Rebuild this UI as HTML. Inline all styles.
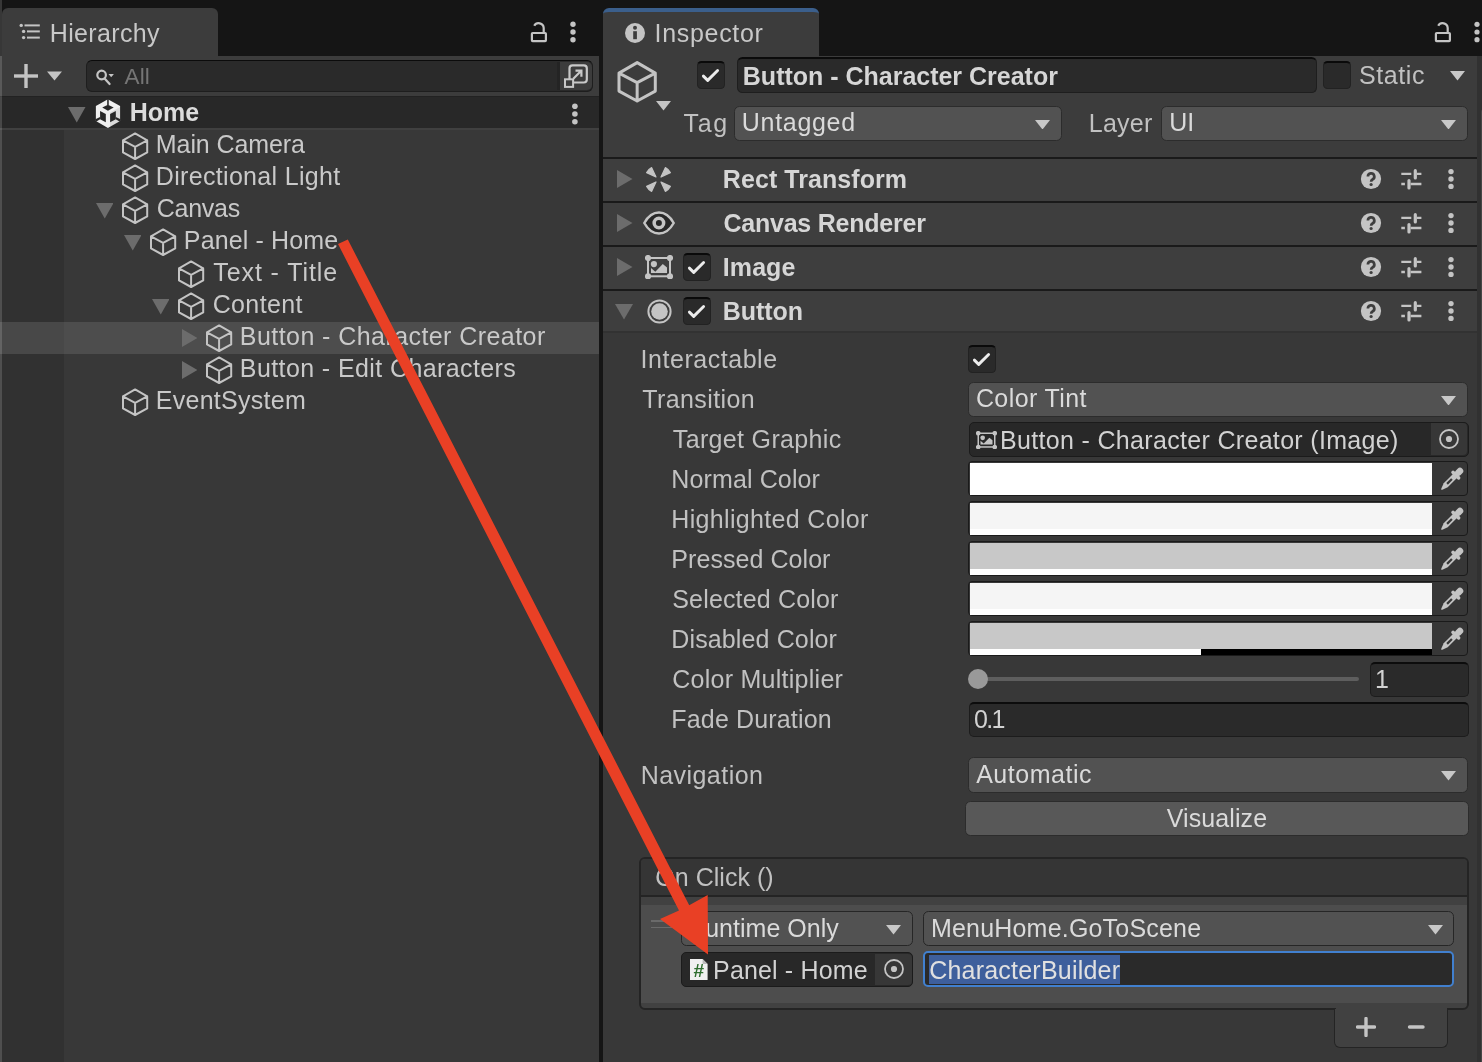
<!DOCTYPE html>
<html><head><meta charset="utf-8"><title>Unity Inspector</title>
<style>
html,body{margin:0;padding:0;background:#383838;}
body{width:1482px;height:1062px;position:relative;overflow:hidden;font-family:"Liberation Sans",sans-serif;font-size:25px;}
div,svg,span{position:absolute;display:block;}
.t{white-space:pre;line-height:32px;height:32px;color:#cdcdcd;font-kerning:normal;}
#w{left:0;top:0;width:1482px;height:1062px;will-change:transform;}
.b{font-weight:bold;}
</style></head><body><div id="w">
<div style="left:0;top:0;width:1px;height:1px;mix-blend-mode:lighten"></div>
<div style="left:0px;top:0px;width:1482px;height:56px;background:#151515;"></div>
<div style="left:0px;top:56px;width:599px;height:1006px;background:#383838;"></div>
<div style="left:0px;top:56px;width:64px;height:1006px;background:#313131;"></div>
<div style="left:2px;top:8px;width:216px;height:48px;background:#3c3c3c;border-radius:6px 6px 0 0;"></div>
<div style="left:0px;top:56px;width:599px;height:40px;background:#3c3c3c;"></div>
<div style="left:0px;top:96px;width:599px;height:32px;background:#282828;"></div>
<div style="left:0px;top:95.8px;width:599px;height:1.4px;background:#222222;"></div>
<div style="left:0px;top:127.8px;width:599px;height:2.4px;background:#404040;"></div>
<div style="left:0px;top:322px;width:599px;height:32px;background:#4d4d4d;"></div>
<div style="left:0px;top:322px;width:64px;height:32px;background:#484848;"></div>
<div style="left:599px;top:0px;width:4px;height:1062px;background:#151515;"></div>
<div style="left:603px;top:56px;width:879px;height:1006px;background:#383838;"></div>
<div style="left:603px;top:8px;width:216px;height:48px;background:#3c3c3c;border-radius:6px 6px 0 0;border-top:4px solid #3b5f8c;box-sizing:border-box;"></div>
<div style="left:603px;top:56px;width:874px;height:101px;background:#3c3c3c;"></div>
<div style="left:1477px;top:56px;width:5px;height:1006px;background:#313131;"></div>
<div style="left:1480.6px;top:109px;width:6px;height:960px;background:#464646;border-radius:3px;"></div>
<svg style="left:18px;top:22px" width="24" height="20" viewBox="0 0 24 20"><g fill="#c4c4c4"><circle cx="3.2" cy="3.4" r="1.7"/><circle cx="5.6" cy="9.4" r="1.7"/><circle cx="5.6" cy="15.6" r="1.7"/><rect x="6.5" y="2.4" width="15.3" height="2"/><rect x="9" y="8.4" width="12.8" height="2"/><rect x="9" y="14.6" width="12.8" height="2"/></g></svg>
<span class="t" style="left:49.75px;top:17.00px;letter-spacing:0.354px;color:#c8c8c8;">Hierarchy</span>
<svg style="left:528px;top:20px" width="22" height="24" viewBox="0 0 22 24"><g fill="none" stroke="#c4c4c4" stroke-width="2.2"><rect x="3.9" y="13" width="14" height="8.1" rx="0.8"/><path d="M15.7 12V8A5.100 5.100 0 0 0 6.200 5.700"/></g></svg>
<svg style="left:0;top:0" width="1482" height="1062"><g fill="#c4c4c4"><circle cx="573" cy="24.3" r="2.7"/><circle cx="573" cy="32" r="2.7"/><circle cx="573" cy="39.7" r="2.7"/></g></svg>
<svg style="left:12px;top:62px" width="52" height="28" viewBox="0 0 52 28"><g fill="#c4c4c4"><rect x="2" y="12.3" width="24" height="3.4"/><rect x="12.3" y="2" width="3.4" height="24"/><path d="M35 9.5h15l-7.5 9z"/></g></svg>
<div style="left:86.3px;top:60px;width:507.2px;height:31.8px;background:#2a2a2a;border-radius:6px;border:1.5px solid #1e1e1e;border-top-color:#0b0b0b;box-sizing:border-box;"></div>
<div style="left:556.7px;top:61.5px;width:3.3px;height:28.8px;background:#242424;"></div>
<div style="left:560px;top:61.5px;width:32px;height:28.8px;background:#3c3c3c;border-radius:0 5px 5px 0;"></div>
<svg style="left:94px;top:68px" width="24" height="20" viewBox="0 0 24 20"><g fill="none" stroke="#c4c4c4" stroke-width="2.2"><circle cx="7.6" cy="7" r="4.3"/><path d="M10.6 10.4l5 5.6" stroke-linecap="round"/></g><path d="M14.5 6h5.4l-2.7 3.2z" fill="#c4c4c4"/></svg>
<span class="t" style="left:124.56px;top:62.90px;letter-spacing:0.072px;font-size:22.5px;line-height:28.80px;color:#757575;">All</span>
<svg style="left:562px;top:62px" width="28" height="28" viewBox="0 0 28 28"><g fill="none" stroke="#c8c8c8" stroke-width="2.2"><rect x="7.5" y="3.3" width="17.300" height="17.200" rx="3"/><rect x="3" y="17.300" width="8.100" height="7.600" fill="#3c3c3c" stroke-width="2"/><path d="M11.300 16.700L19.200 8.800M13.500 8.700H19.400V14.800"/></g></svg>
<svg style="left:68px;top:107px" width="17.5" height="15.5" viewBox="0 0 17.5 15.5"><path d="M0 0h17.5l-8.75 15.5z" fill="#6c6c6c"/></svg>
<svg style="left:88px;top:94px" width="40" height="38" viewBox="0 0 1118 1062"><path d="M557 148L897 337L897 758L557 952L220 758L220 337Z" fill="#f0f0f0"/><path d="M615 520L897 360L897 758L615 920Z" fill="#000" opacity="0.09"/><g fill="#282828"><rect x="536" y="130" width="44" height="180"/><path d="M557 298L718 378L557 467L398 378Z"/><path d="M338 478L498 562L498 788L338 704Z"/><path d="M778 478L618 562L618 788L778 704Z"/><path d="M205 708L338 640L338 705L225 775Z"/><path d="M910 708L777 640L777 705L890 775Z"/></g></svg>
<span class="t b" style="left:129.83px;top:96.00px;letter-spacing:-0.044px;color:#dcdcdc;">Home</span>
<svg style="left:0;top:0" width="1482" height="1062"><g fill="#c4c4c4"><circle cx="574.9" cy="106.3" r="2.8"/><circle cx="574.9" cy="114" r="2.8"/><circle cx="574.9" cy="121.7" r="2.8"/></g></svg>
<svg style="left:121px;top:131.1px" width="28.0" height="30.0" viewBox="0 0 28 30"><path d="M14.1 2.4L26.2 9.4L26.2 21.4L14.1 28.0L2.0 21.4L2.0 9.4Z M2.0 9.4L14.1 15.8L26.2 9.4 M14.1 15.8L14.1 28.0" fill="none" stroke="#c4c4c4" stroke-width="2.0" stroke-linejoin="round" stroke-linecap="round"/></svg>
<span class="t" style="left:155.85px;top:128.00px;letter-spacing:-0.090px;color:#c9c9c9;">Main Camera</span>
<svg style="left:121px;top:163.1px" width="28.0" height="30.0" viewBox="0 0 28 30"><path d="M14.1 2.4L26.2 9.4L26.2 21.4L14.1 28.0L2.0 21.4L2.0 9.4Z M2.0 9.4L14.1 15.8L26.2 9.4 M14.1 15.8L14.1 28.0" fill="none" stroke="#c4c4c4" stroke-width="2.0" stroke-linejoin="round" stroke-linecap="round"/></svg>
<span class="t" style="left:155.85px;top:160.00px;letter-spacing:0.317px;color:#c9c9c9;">Directional Light</span>
<svg style="left:121px;top:195.1px" width="28.0" height="30.0" viewBox="0 0 28 30"><path d="M14.1 2.4L26.2 9.4L26.2 21.4L14.1 28.0L2.0 21.4L2.0 9.4Z M2.0 9.4L14.1 15.8L26.2 9.4 M14.1 15.8L14.1 28.0" fill="none" stroke="#c4c4c4" stroke-width="2.0" stroke-linejoin="round" stroke-linecap="round"/></svg>
<span class="t" style="left:156.63px;top:192.00px;letter-spacing:-0.219px;color:#c9c9c9;">Canvas</span>
<svg style="left:95.5px;top:203px" width="17.5" height="15.5" viewBox="0 0 17.5 15.5"><path d="M0 0h17.5l-8.75 15.5z" fill="#6c6c6c"/></svg>
<svg style="left:149px;top:227.1px" width="28.0" height="30.0" viewBox="0 0 28 30"><path d="M14.1 2.4L26.2 9.4L26.2 21.4L14.1 28.0L2.0 21.4L2.0 9.4Z M2.0 9.4L14.1 15.8L26.2 9.4 M14.1 15.8L14.1 28.0" fill="none" stroke="#c4c4c4" stroke-width="2.0" stroke-linejoin="round" stroke-linecap="round"/></svg>
<span class="t" style="left:183.85px;top:224.00px;letter-spacing:0.129px;color:#c9c9c9;">Panel - Home</span>
<svg style="left:123.5px;top:235px" width="17.5" height="15.5" viewBox="0 0 17.5 15.5"><path d="M0 0h17.5l-8.75 15.5z" fill="#6c6c6c"/></svg>
<svg style="left:177px;top:259.1px" width="28.0" height="30.0" viewBox="0 0 28 30"><path d="M14.1 2.4L26.2 9.4L26.2 21.4L14.1 28.0L2.0 21.4L2.0 9.4Z M2.0 9.4L14.1 15.8L26.2 9.4 M14.1 15.8L14.1 28.0" fill="none" stroke="#c4c4c4" stroke-width="2.0" stroke-linejoin="round" stroke-linecap="round"/></svg>
<span class="t" style="left:213.34px;top:256.00px;letter-spacing:0.896px;color:#c9c9c9;">Text - Title</span>
<svg style="left:177px;top:291.1px" width="28.0" height="30.0" viewBox="0 0 28 30"><path d="M14.1 2.4L26.2 9.4L26.2 21.4L14.1 28.0L2.0 21.4L2.0 9.4Z M2.0 9.4L14.1 15.8L26.2 9.4 M14.1 15.8L14.1 28.0" fill="none" stroke="#c4c4c4" stroke-width="2.0" stroke-linejoin="round" stroke-linecap="round"/></svg>
<span class="t" style="left:212.63px;top:288.00px;letter-spacing:0.382px;color:#c9c9c9;">Content</span>
<svg style="left:151.5px;top:299px" width="17.5" height="15.5" viewBox="0 0 17.5 15.5"><path d="M0 0h17.5l-8.75 15.5z" fill="#6c6c6c"/></svg>
<svg style="left:205px;top:323.1px" width="28.0" height="30.0" viewBox="0 0 28 30"><path d="M14.1 2.4L26.2 9.4L26.2 21.4L14.1 28.0L2.0 21.4L2.0 9.4Z M2.0 9.4L14.1 15.8L26.2 9.4 M14.1 15.8L14.1 28.0" fill="none" stroke="#c4c4c4" stroke-width="2.0" stroke-linejoin="round" stroke-linecap="round"/></svg>
<span class="t" style="left:239.85px;top:320.00px;letter-spacing:0.432px;color:#c9c9c9;">Button - Character Creator</span>
<svg style="left:181.7px;top:329px" width="15.5" height="18" viewBox="0 0 15.5 18"><path d="M0 0l15.5 9.0l-15.5 9.0z" fill="#6c6c6c"/></svg>
<svg style="left:205px;top:355.1px" width="28.0" height="30.0" viewBox="0 0 28 30"><path d="M14.1 2.4L26.2 9.4L26.2 21.4L14.1 28.0L2.0 21.4L2.0 9.4Z M2.0 9.4L14.1 15.8L26.2 9.4 M14.1 15.8L14.1 28.0" fill="none" stroke="#c4c4c4" stroke-width="2.0" stroke-linejoin="round" stroke-linecap="round"/></svg>
<span class="t" style="left:239.85px;top:352.00px;letter-spacing:0.399px;color:#c9c9c9;">Button - Edit Characters</span>
<svg style="left:181.7px;top:361px" width="15.5" height="18" viewBox="0 0 15.5 18"><path d="M0 0l15.5 9.0l-15.5 9.0z" fill="#6c6c6c"/></svg>
<svg style="left:121px;top:387.1px" width="28.0" height="30.0" viewBox="0 0 28 30"><path d="M14.1 2.4L26.2 9.4L26.2 21.4L14.1 28.0L2.0 21.4L2.0 9.4Z M2.0 9.4L14.1 15.8L26.2 9.4 M14.1 15.8L14.1 28.0" fill="none" stroke="#c4c4c4" stroke-width="2.0" stroke-linejoin="round" stroke-linecap="round"/></svg>
<span class="t" style="left:155.85px;top:384.00px;letter-spacing:0.262px;color:#c9c9c9;">EventSystem</span>
<svg style="left:624px;top:22px" width="22" height="22" viewBox="0 0 22 22"><circle cx="11" cy="11" r="10" fill="#c4c4c4"/><rect x="9.200" y="9.200" width="3.700" height="8" fill="#3c3c3c"/><circle cx="11" cy="5.800" r="2" fill="#3c3c3c"/></svg>
<span class="t" style="left:654.49px;top:17.00px;letter-spacing:0.699px;color:#c8c8c8;">Inspector</span>
<svg style="left:1432px;top:20px" width="22" height="24" viewBox="0 0 22 24"><g fill="none" stroke="#c4c4c4" stroke-width="2.2"><rect x="3.9" y="13" width="14" height="8.1" rx="0.8"/><path d="M15.7 12V8A5.100 5.100 0 0 0 6.200 5.700"/></g></svg>
<svg style="left:0;top:0" width="1482" height="1062"><g fill="#c4c4c4"><circle cx="1477" cy="24.3" r="2.6"/><circle cx="1477" cy="32" r="2.6"/><circle cx="1477" cy="39.7" r="2.6"/></g></svg>
<svg style="left:616px;top:58.5px" width="42.0" height="45.0" viewBox="0 0 28 30"><path d="M14.1 2.4L26.2 9.4L26.2 21.4L14.1 28.0L2.0 21.4L2.0 9.4Z M2.0 9.4L14.1 15.8L26.2 9.4 M14.1 15.8L14.1 28.0" fill="none" stroke="#c4c4c4" stroke-width="2.0" stroke-linejoin="round" stroke-linecap="round"/></svg>
<svg style="left:655.5px;top:101px" width="15" height="9.5" viewBox="0 0 15 9.5"><path d="M0 0h15l-7.5 9.5z" fill="#c4c4c4"/></svg>
<div style="left:696.6px;top:61px;width:28px;height:27.8px;background:#2a2a2a;border-radius:4.5px;border:1.5px solid #222;border-top:2px solid #0a0a0a;box-sizing:border-box;"></div>
<svg style="left:696.6px;top:61px" width="28" height="28" viewBox="0 0 28 28"><path d="M6.400 15.100L10.700 19.400L20.600 9.500" fill="none" stroke="#ececec" stroke-width="2.900" stroke-linecap="round" stroke-linejoin="round"/></svg>
<div style="left:737px;top:57px;width:580.3px;height:35.8px;background:#2a2a2a;border-radius:5.5px;border:1.5px solid #1e1e1e;border-top:2px solid #0b0b0b;box-sizing:border-box;"></div>
<span class="t b" style="left:742.83px;top:60.00px;letter-spacing:-0.011px;color:#d6d6d6;">Button - Character Creator</span>
<div style="left:1323px;top:61px;width:28px;height:28px;background:#2a2a2a;border-radius:4.5px;border:1.5px solid #222;border-top:2px solid #0a0a0a;box-sizing:border-box;"></div>
<span class="t" style="left:1359.06px;top:59.00px;letter-spacing:0.574px;color:#c1c1c1;">Static</span>
<svg style="left:1450px;top:71px" width="15" height="9.5" viewBox="0 0 15 9.5"><path d="M0 0h15l-7.5 9.5z" fill="#c8c8c8"/></svg>
<span class="t" style="left:683.54px;top:107.00px;letter-spacing:1.633px;color:#c1c1c1;">Tag</span>
<div style="left:734.4px;top:105.5px;width:327.6px;height:35.2px;background:#525252;border-radius:5.5px;border:1.5px solid #2c2c2c;box-sizing:border-box;"></div>
<svg style="left:1035.0px;top:119.5px" width="15" height="9.5" viewBox="0 0 15 9.5"><path d="M0 0h15l-7.5 9.5z" fill="#c8c8c8"/></svg>
<span class="t" style="left:741.87px;top:106.00px;letter-spacing:0.688px;color:#dadada;">Untagged</span>
<span class="t" style="left:1088.85px;top:107.00px;letter-spacing:0.207px;color:#c1c1c1;">Layer</span>
<div style="left:1161px;top:105.5px;width:307.4px;height:35.2px;background:#525252;border-radius:5.5px;border:1.5px solid #2c2c2c;box-sizing:border-box;"></div>
<svg style="left:1441.4px;top:119.5px" width="15" height="9.5" viewBox="0 0 15 9.5"><path d="M0 0h15l-7.5 9.5z" fill="#c8c8c8"/></svg>
<span class="t" style="left:1169.17px;top:106.00px;letter-spacing:-0.064px;color:#dadada;">UI</span>
<div style="left:603px;top:157px;width:874px;height:2px;background:#1a1a1a;"></div>
<div style="left:603px;top:159px;width:874px;height:42px;background:#3e3e3e;"></div>
<svg style="left:617px;top:170px" width="15.5" height="18" viewBox="0 0 15.5 18"><path d="M0 0l15.5 9.0l-15.5 9.0z" fill="#6c6c6c"/></svg>
<span class="t b" style="left:722.83px;top:163.00px;letter-spacing:0.064px;color:#d6d6d6;">Rect Transform</span>
<svg style="left:1360px;top:168px" width="22" height="22"><circle cx="11" cy="11" r="10.1" fill="#c4c4c4"/><path d="M7.9 8.6a3.2 3.2 0 1 1 4.6 2.9c-1 .6-1.4 1.1-1.4 2.2" fill="none" stroke="#3e3e3e" stroke-width="2.700"/><circle cx="11.1" cy="16.5" r="1.600" fill="#3e3e3e"/></svg>
<svg style="left:1400.5px;top:168.7px" width="21" height="21"><g stroke="#c4c4c4" stroke-width="2.3" fill="none"><path d="M0.3 4.8h10M15.8 4.8h4.6M0.3 15h3.6M9.6 15h10.8"/></g><g stroke="#c4c4c4" stroke-width="3.2" stroke-linecap="round"><path d="M14.3 1.7v7.2M8 11.5v7.4"/></g></svg>
<svg style="left:0;top:0" width="1482" height="1062"><g fill="#c4c4c4"><circle cx="1451" cy="171.6" r="2.7"/><circle cx="1451" cy="179" r="2.7"/><circle cx="1451" cy="186.4" r="2.7"/></g></svg>
<svg style="left:646.4px;top:166.5px" width="25" height="25" viewBox="0 0 25 25"><g fill="#c4c4c4" stroke="#c4c4c4" stroke-width="1.3" stroke-linejoin="round"><path transform="rotate(45 12.5 12.5)" d="M16.1 12.5L25.7 9.0Q26.8 12.5 25.7 16.0Z"/><path transform="rotate(135 12.5 12.5)" d="M16.1 12.5L25.7 9.0Q26.8 12.5 25.7 16.0Z"/><path transform="rotate(225 12.5 12.5)" d="M16.1 12.5L25.7 9.0Q26.8 12.5 25.7 16.0Z"/><path transform="rotate(315 12.5 12.5)" d="M16.1 12.5L25.7 9.0Q26.8 12.5 25.7 16.0Z"/></g></svg>
<div style="left:603px;top:201px;width:874px;height:2px;background:#1a1a1a;"></div>
<div style="left:603px;top:203px;width:874px;height:42px;background:#3e3e3e;"></div>
<svg style="left:617px;top:214px" width="15.5" height="18" viewBox="0 0 15.5 18"><path d="M0 0l15.5 9.0l-15.5 9.0z" fill="#6c6c6c"/></svg>
<span class="t b" style="left:723.47px;top:207.00px;letter-spacing:-0.232px;color:#d6d6d6;">Canvas Renderer</span>
<svg style="left:1360px;top:212px" width="22" height="22"><circle cx="11" cy="11" r="10.1" fill="#c4c4c4"/><path d="M7.9 8.6a3.2 3.2 0 1 1 4.6 2.9c-1 .6-1.4 1.1-1.4 2.2" fill="none" stroke="#3e3e3e" stroke-width="2.700"/><circle cx="11.1" cy="16.5" r="1.600" fill="#3e3e3e"/></svg>
<svg style="left:1400.5px;top:212.7px" width="21" height="21"><g stroke="#c4c4c4" stroke-width="2.3" fill="none"><path d="M0.3 4.8h10M15.8 4.8h4.6M0.3 15h3.6M9.6 15h10.8"/></g><g stroke="#c4c4c4" stroke-width="3.2" stroke-linecap="round"><path d="M14.3 1.7v7.2M8 11.5v7.4"/></g></svg>
<svg style="left:0;top:0" width="1482" height="1062"><g fill="#c4c4c4"><circle cx="1451" cy="215.6" r="2.7"/><circle cx="1451" cy="223" r="2.7"/><circle cx="1451" cy="230.4" r="2.7"/></g></svg>
<svg style="left:643px;top:210.8px" width="32" height="24" viewBox="0 0 32 24"><path d="M1.3 12C6 3.6 12 1.5 16 1.5S26 3.6 30.7 12C26 20.400 20 22.5 16 22.5S6 20.4 1.300 12Z" fill="#272727" stroke="#c4c4c4" stroke-width="2.5" stroke-linejoin="round"/><circle cx="15.9" cy="12" r="4.750" fill="none" stroke="#c4c4c4" stroke-width="3.5"/></svg>
<div style="left:603px;top:245px;width:874px;height:2px;background:#1a1a1a;"></div>
<div style="left:603px;top:247px;width:874px;height:42px;background:#3e3e3e;"></div>
<svg style="left:617px;top:258px" width="15.5" height="18" viewBox="0 0 15.5 18"><path d="M0 0l15.5 9.0l-15.5 9.0z" fill="#6c6c6c"/></svg>
<div style="left:683px;top:253px;width:27.5px;height:27.6px;background:#2a2a2a;border-radius:4.5px;border:1.5px solid #222;border-top:2px solid #0a0a0a;box-sizing:border-box;"></div>
<svg style="left:683px;top:253px" width="28" height="28" viewBox="0 0 28 28"><path d="M6.400 15.100L10.700 19.400L20.600 9.500" fill="none" stroke="#ececec" stroke-width="2.900" stroke-linecap="round" stroke-linejoin="round"/></svg>
<span class="t b" style="left:722.83px;top:251.00px;letter-spacing:0.068px;color:#d6d6d6;">Image</span>
<svg style="left:1360px;top:256px" width="22" height="22"><circle cx="11" cy="11" r="10.1" fill="#c4c4c4"/><path d="M7.9 8.6a3.2 3.2 0 1 1 4.6 2.9c-1 .6-1.4 1.1-1.4 2.2" fill="none" stroke="#3e3e3e" stroke-width="2.700"/><circle cx="11.1" cy="16.5" r="1.600" fill="#3e3e3e"/></svg>
<svg style="left:1400.5px;top:256.7px" width="21" height="21"><g stroke="#c4c4c4" stroke-width="2.3" fill="none"><path d="M0.3 4.8h10M15.8 4.8h4.6M0.3 15h3.6M9.6 15h10.8"/></g><g stroke="#c4c4c4" stroke-width="3.2" stroke-linecap="round"><path d="M14.3 1.7v7.2M8 11.5v7.4"/></g></svg>
<svg style="left:0;top:0" width="1482" height="1062"><g fill="#c4c4c4"><circle cx="1451" cy="259.6" r="2.7"/><circle cx="1451" cy="267" r="2.7"/><circle cx="1451" cy="274.4" r="2.7"/></g></svg>
<svg style="left:645px;top:255px" width="28.0" height="24.3" viewBox="0 0 28 24.3"><rect x="3" y="3" width="22" height="18.3" fill="none" stroke="#c4c4c4" stroke-width="2"/><g fill="#c4c4c4"><circle cx="3" cy="3" r="3.1"/><circle cx="25" cy="3" r="3.1"/><circle cx="3" cy="21.3" r="3.1"/><circle cx="25" cy="21.3" r="3.1"/><circle cx="8.9" cy="9.1" r="3.1"/><path d="M6 12.900L10.300 16.800L17.800 8.900L22 12.500V17.900H6z"/></g></svg>
<div style="left:603px;top:289px;width:874px;height:2px;background:#1a1a1a;"></div>
<div style="left:603px;top:291px;width:874px;height:42px;background:#3e3e3e;"></div>
<svg style="left:615px;top:304px" width="18" height="15.5" viewBox="0 0 18 15.5"><path d="M0 0h18l-9.0 15.5z" fill="#6c6c6c"/></svg>
<div style="left:683px;top:297px;width:27.5px;height:27.6px;background:#2a2a2a;border-radius:4.5px;border:1.5px solid #222;border-top:2px solid #0a0a0a;box-sizing:border-box;"></div>
<svg style="left:683px;top:297px" width="28" height="28" viewBox="0 0 28 28"><path d="M6.400 15.100L10.700 19.400L20.600 9.500" fill="none" stroke="#ececec" stroke-width="2.900" stroke-linecap="round" stroke-linejoin="round"/></svg>
<span class="t b" style="left:722.83px;top:295.00px;letter-spacing:-0.059px;color:#d6d6d6;">Button</span>
<svg style="left:1360px;top:300px" width="22" height="22"><circle cx="11" cy="11" r="10.1" fill="#c4c4c4"/><path d="M7.9 8.6a3.2 3.2 0 1 1 4.6 2.9c-1 .6-1.4 1.1-1.4 2.2" fill="none" stroke="#3e3e3e" stroke-width="2.700"/><circle cx="11.1" cy="16.5" r="1.600" fill="#3e3e3e"/></svg>
<svg style="left:1400.5px;top:300.7px" width="21" height="21"><g stroke="#c4c4c4" stroke-width="2.3" fill="none"><path d="M0.3 4.8h10M15.8 4.8h4.6M0.3 15h3.6M9.6 15h10.8"/></g><g stroke="#c4c4c4" stroke-width="3.2" stroke-linecap="round"><path d="M14.3 1.7v7.2M8 11.5v7.4"/></g></svg>
<svg style="left:0;top:0" width="1482" height="1062"><g fill="#c4c4c4"><circle cx="1451" cy="303.6" r="2.7"/><circle cx="1451" cy="311" r="2.7"/><circle cx="1451" cy="318.4" r="2.7"/></g></svg>
<svg style="left:646.6px;top:298.5px" width="25" height="25" viewBox="0 0 25 25"><circle cx="12.5" cy="12.5" r="11.1" fill="none" stroke="#c4c4c4" stroke-width="2"/><circle cx="12.5" cy="12.5" r="8.3" fill="#c4c4c4"/></svg>
<div style="left:603px;top:331px;width:874px;height:2px;background:#323232;"></div>
<div style="left:603px;top:333px;width:874px;height:10px;background:#383838;"></div>
<span class="t" style="left:640.59px;top:343.00px;letter-spacing:0.534px;color:#c1c1c1;">Interactable</span>
<div style="left:968px;top:345px;width:28px;height:28px;background:#2a2a2a;border-radius:4.5px;border:1.5px solid #222;border-top:2px solid #0a0a0a;box-sizing:border-box;"></div>
<svg style="left:968px;top:345px" width="28" height="28" viewBox="0 0 28 28"><path d="M6.400 15.100L10.700 19.400L20.600 9.500" fill="none" stroke="#ececec" stroke-width="2.900" stroke-linecap="round" stroke-linejoin="round"/></svg>
<span class="t" style="left:642.34px;top:383.00px;letter-spacing:0.383px;color:#c1c1c1;">Transition</span>
<div style="left:968.4px;top:381.6px;width:500px;height:35.2px;background:#525252;border-radius:5.5px;border:1.5px solid #2c2c2c;box-sizing:border-box;"></div>
<svg style="left:1441.4px;top:395.6px" width="15" height="9.5" viewBox="0 0 15 9.5"><path d="M0 0h15l-7.5 9.5z" fill="#c8c8c8"/></svg>
<span class="t" style="left:975.93px;top:382.00px;letter-spacing:0.397px;color:#dadada;">Color Tint</span>
<span class="t" style="left:672.84px;top:423.00px;letter-spacing:0.335px;color:#c1c1c1;">Target Graphic</span>
<div style="left:969px;top:421.5px;width:499.5px;height:35px;background:#282828;border-radius:5px;border:1.6px solid #1b1b1b;box-sizing:border-box;"></div>
<div style="left:1430.5px;top:423.0px;width:36.5px;height:32px;background:#373737;border-radius:0 4px 4px 0;"></div>
<svg style="left:1438.0px;top:428.0px" width="22" height="22"><circle cx="11" cy="11" r="9" fill="none" stroke="#c4c4c4" stroke-width="1.8"/><circle cx="11" cy="11" r="3.1" fill="#c4c4c4"/></svg>
<svg style="left:976px;top:431px" width="21.0" height="18.225" viewBox="0 0 28 24.3"><rect x="3" y="3" width="22" height="18.3" fill="none" stroke="#c4c4c4" stroke-width="2"/><g fill="#c4c4c4"><circle cx="3" cy="3" r="3.1"/><circle cx="25" cy="3" r="3.1"/><circle cx="3" cy="21.3" r="3.1"/><circle cx="25" cy="21.3" r="3.1"/><circle cx="8.9" cy="9.1" r="3.1"/><path d="M6 12.900L10.300 16.800L17.800 8.900L22 12.500V17.900H6z"/></g></svg>
<span class="t" style="left:1000.05px;top:424.00px;letter-spacing:0.323px;color:#d2d2d2;">Button - Character Creator (Image)</span>
<span class="t" style="left:671.35px;top:463.00px;letter-spacing:0.119px;color:#c1c1c1;">Normal Color</span>
<div style="left:968.3000000000001px;top:461.3px;width:500.2px;height:35.1px;background:#373737;border-radius:4px;border:1.8px solid #1a1a1a;box-sizing:border-box;"></div>
<div style="left:970.1px;top:462.8px;width:461.5px;height:26px;background:#ffffff;"></div>
<div style="left:970.1px;top:488.8px;width:461.5px;height:6px;background:#000;"></div>
<div style="left:970.1px;top:488.8px;width:461.5px;height:6px;background:#fff;"></div>
<svg style="left:1439.7px;top:465.5px" width="24" height="24"><g transform="translate(1.300 23.700) rotate(45) translate(0 -29.700)"><g fill="#c4c4c4"><rect x="-3.300" y="0" width="6.600" height="9" rx="3.300"/><rect x="-5.700" y="7.400" width="11.400" height="3.500" rx="1.600"/><path d="M-2.800 10H2.800V23.500L0.800 29Q0 30.400 -0.800 29L-2.800 23.500Z"/></g><rect x="-1.100" y="14.700" width="2.200" height="6.800" fill="#373737"/></g></svg>
<span class="t" style="left:671.35px;top:503.00px;letter-spacing:0.331px;color:#c1c1c1;">Highlighted Color</span>
<div style="left:968.3000000000001px;top:501.3px;width:500.2px;height:35.1px;background:#373737;border-radius:4px;border:1.8px solid #1a1a1a;box-sizing:border-box;"></div>
<div style="left:970.1px;top:502.8px;width:461.5px;height:26px;background:#f5f5f5;"></div>
<div style="left:970.1px;top:528.8px;width:461.5px;height:6px;background:#000;"></div>
<div style="left:970.1px;top:528.8px;width:461.5px;height:6px;background:#fff;"></div>
<svg style="left:1439.7px;top:505.5px" width="24" height="24"><g transform="translate(1.300 23.700) rotate(45) translate(0 -29.700)"><g fill="#c4c4c4"><rect x="-3.300" y="0" width="6.600" height="9" rx="3.300"/><rect x="-5.700" y="7.400" width="11.400" height="3.500" rx="1.600"/><path d="M-2.800 10H2.800V23.500L0.800 29Q0 30.400 -0.800 29L-2.800 23.500Z"/></g><rect x="-1.100" y="14.700" width="2.200" height="6.800" fill="#373737"/></g></svg>
<span class="t" style="left:671.35px;top:543.00px;letter-spacing:0.056px;color:#c1c1c1;">Pressed Color</span>
<div style="left:968.3000000000001px;top:541.3px;width:500.2px;height:35.1px;background:#373737;border-radius:4px;border:1.8px solid #1a1a1a;box-sizing:border-box;"></div>
<div style="left:970.1px;top:542.8px;width:461.5px;height:26px;background:#c8c8c8;"></div>
<div style="left:970.1px;top:568.8px;width:461.5px;height:6px;background:#000;"></div>
<div style="left:970.1px;top:568.8px;width:461.5px;height:6px;background:#fff;"></div>
<svg style="left:1439.7px;top:545.5px" width="24" height="24"><g transform="translate(1.300 23.700) rotate(45) translate(0 -29.700)"><g fill="#c4c4c4"><rect x="-3.300" y="0" width="6.600" height="9" rx="3.300"/><rect x="-5.700" y="7.400" width="11.400" height="3.500" rx="1.600"/><path d="M-2.800 10H2.800V23.500L0.800 29Q0 30.400 -0.800 29L-2.800 23.500Z"/></g><rect x="-1.100" y="14.700" width="2.200" height="6.800" fill="#373737"/></g></svg>
<span class="t" style="left:672.26px;top:583.00px;letter-spacing:0.167px;color:#c1c1c1;">Selected Color</span>
<div style="left:968.3000000000001px;top:581.3px;width:500.2px;height:35.1px;background:#373737;border-radius:4px;border:1.8px solid #1a1a1a;box-sizing:border-box;"></div>
<div style="left:970.1px;top:582.8px;width:461.5px;height:26px;background:#f5f5f5;"></div>
<div style="left:970.1px;top:608.8px;width:461.5px;height:6px;background:#000;"></div>
<div style="left:970.1px;top:608.8px;width:461.5px;height:6px;background:#fff;"></div>
<svg style="left:1439.7px;top:585.5px" width="24" height="24"><g transform="translate(1.300 23.700) rotate(45) translate(0 -29.700)"><g fill="#c4c4c4"><rect x="-3.300" y="0" width="6.600" height="9" rx="3.300"/><rect x="-5.700" y="7.400" width="11.400" height="3.500" rx="1.600"/><path d="M-2.800 10H2.800V23.500L0.800 29Q0 30.400 -0.800 29L-2.800 23.500Z"/></g><rect x="-1.100" y="14.700" width="2.200" height="6.800" fill="#373737"/></g></svg>
<span class="t" style="left:671.35px;top:623.00px;letter-spacing:0.123px;color:#c1c1c1;">Disabled Color</span>
<div style="left:968.3000000000001px;top:621.3px;width:500.2px;height:35.1px;background:#373737;border-radius:4px;border:1.8px solid #1a1a1a;box-sizing:border-box;"></div>
<div style="left:970.1px;top:622.8px;width:461.5px;height:26px;background:#c8c8c8;"></div>
<div style="left:970.1px;top:648.8px;width:461.5px;height:6px;background:#000;"></div>
<div style="left:970.1px;top:648.8px;width:230.75px;height:6px;background:#fff;"></div>
<svg style="left:1439.7px;top:625.5px" width="24" height="24"><g transform="translate(1.300 23.700) rotate(45) translate(0 -29.700)"><g fill="#c4c4c4"><rect x="-3.300" y="0" width="6.600" height="9" rx="3.300"/><rect x="-5.700" y="7.400" width="11.400" height="3.500" rx="1.600"/><path d="M-2.800 10H2.800V23.500L0.800 29Q0 30.400 -0.800 29L-2.800 23.500Z"/></g><rect x="-1.100" y="14.700" width="2.200" height="6.800" fill="#373737"/></g></svg>
<span class="t" style="left:672.13px;top:663.00px;letter-spacing:0.272px;color:#c1c1c1;">Color Multiplier</span>
<div style="left:978px;top:677px;width:381px;height:4px;background:#5e5e5e;border-radius:2px;"></div>
<div style="left:968px;top:669px;width:20px;height:20px;background:#999999;border-radius:50%;"></div>
<div style="left:1370px;top:661.5px;width:98.5px;height:35px;background:#2a2a2a;border-radius:5px;border:1.5px solid #1c1c1c;border-top:2px solid #0c0c0c;box-sizing:border-box;"></div>
<span class="t" style="left:1375.10px;top:663.00px;letter-spacing:0.000px;color:#d2d2d2;">1</span>
<span class="t" style="left:671.35px;top:703.00px;letter-spacing:0.154px;color:#c1c1c1;">Fade Duration</span>
<div style="left:969px;top:701.5px;width:499.5px;height:35px;background:#2a2a2a;border-radius:5px;border:1.5px solid #1c1c1c;border-top:2px solid #0c0c0c;box-sizing:border-box;"></div>
<span class="t" style="left:974.12px;top:703.00px;letter-spacing:-1.728px;color:#d2d2d2;">0.1</span>
<span class="t" style="left:640.65px;top:759.00px;letter-spacing:0.461px;color:#c1c1c1;">Navigation</span>
<div style="left:968.4px;top:757.4px;width:500px;height:35.2px;background:#525252;border-radius:5.5px;border:1.5px solid #2c2c2c;box-sizing:border-box;"></div>
<svg style="left:1441.4px;top:771.4px" width="15" height="9.5" viewBox="0 0 15 9.5"><path d="M0 0h15l-7.5 9.5z" fill="#c8c8c8"/></svg>
<span class="t" style="left:976.15px;top:758.00px;letter-spacing:0.519px;color:#dadada;">Automatic</span>
<div style="left:964.6px;top:801.2px;width:504px;height:35.2px;background:#585858;border-radius:5.5px;border:1.5px solid #2c2c2c;box-sizing:border-box;"></div>
<span class="t" style="left:1166.69px;top:802.00px;letter-spacing:0.103px;color:#dadada;">Visualize</span>
<div style="left:639.3px;top:857.3px;width:829.9px;height:152.7px;background:#414141;border-radius:6px;border:2px solid #242424;box-sizing:border-box;"></div>
<div style="left:641.3px;top:859.3px;width:825.9px;height:36.2px;background:#353535;border-radius:4px 4px 0 0;"></div>
<div style="left:641.3px;top:895.3px;width:825.9px;height:1.7px;background:#242424;"></div>
<div style="left:641.3px;top:905px;width:825.9px;height:98px;background:#4d4d4d;"></div>
<span class="t" style="left:655.32px;top:861.00px;letter-spacing:0.018px;color:#c1c1c1;">On Click ()</span>
<div style="left:651px;top:920.2px;width:21px;height:1.7px;background:#6a6a6a;"></div>
<div style="left:651px;top:926.5px;width:21px;height:1.7px;background:#6a6a6a;"></div>
<div style="left:680.8px;top:911px;width:232px;height:35.4px;background:#525252;border-radius:5.5px;border:1.5px solid #262626;box-sizing:border-box;"></div>
<svg style="left:885.8px;top:925px" width="15" height="9.5" viewBox="0 0 15 9.5"><path d="M0 0h15l-7.5 9.5z" fill="#c8c8c8"/></svg>
<span class="t" style="left:687.05px;top:912.00px;letter-spacing:0.033px;color:#dadada;">Runtime Only</span>
<div style="left:923.3px;top:911px;width:531.2px;height:35.4px;background:#525252;border-radius:5.5px;border:1.5px solid #262626;box-sizing:border-box;"></div>
<svg style="left:1427.5px;top:925px" width="15" height="9.5" viewBox="0 0 15 9.5"><path d="M0 0h15l-7.5 9.5z" fill="#c8c8c8"/></svg>
<span class="t" style="left:930.95px;top:912.00px;letter-spacing:0.197px;color:#dadada;">MenuHome.GoToScene</span>
<div style="left:681px;top:952px;width:232px;height:34.5px;background:#282828;border-radius:5px;border:1.6px solid #1b1b1b;box-sizing:border-box;"></div>
<div style="left:875px;top:953.5px;width:36.5px;height:31.5px;background:#373737;border-radius:0 4px 4px 0;"></div>
<svg style="left:882.5px;top:958.25px" width="22" height="22"><circle cx="11" cy="11" r="9" fill="none" stroke="#c4c4c4" stroke-width="1.8"/><circle cx="11" cy="11" r="3.1" fill="#c4c4c4"/></svg>
<svg style="left:690.4px;top:959.2px" width="17.6" height="21" viewBox="0 0 17.6 21"><path d="M0 0h12.600L17.600 5V21H0z" fill="#f0f0f0"/><path d="M12.600 0v5H17.600z" fill="#b8b8b8"/></svg>
<span class="t" style="left:693.62px;top:958.80px;letter-spacing:0.000px;font-size:19px;line-height:24.32px;color:#2f6e2f;font-weight:bold;">#</span>
<span class="t" style="left:713.05px;top:954.00px;letter-spacing:0.156px;color:#d2d2d2;">Panel - Home</span>
<div style="left:923.3px;top:951.3px;width:531.2px;height:35.6px;background:#2a2a2a;border-radius:5px;border:2px solid #4180cf;box-sizing:border-box;"></div>
<div style="left:929px;top:955px;width:191.2px;height:29px;background:#3e5f9c;"></div>
<span class="t" style="left:929.23px;top:954.00px;letter-spacing:0.213px;color:#e0e0e0;">CharacterBuilder</span>
<div style="left:1334px;top:1008.5px;width:114px;height:39.5px;background:#414141;border-radius:0 0 6px 6px;border:1.5px solid #242424;border-top:none;box-sizing:border-box;"></div>
<div style="left:1335.5px;top:1007px;width:111px;height:3px;background:#414141;"></div>
<svg style="left:1356px;top:1017px" width="20" height="20" viewBox="0 0 20 20"><path d="M10 1.500v17M1.500 10h17" stroke="#c4c4c4" stroke-width="3.400" stroke-linecap="round"/></svg>
<svg style="left:1406px;top:1017px" width="20" height="20" viewBox="0 0 20 20"><path d="M3.500 10h13.500" stroke="#c4c4c4" stroke-width="3.400" stroke-linecap="round"/></svg>
<div style="left:0px;top:0px;width:2px;height:1062px;background:rgba(255,255,255,0.15);"></div>
<svg style="left:0;top:0" width="1482" height="1062"><g fill="#e94025" stroke="none"><path d="M338 243.900L347.800 239.400L689.2 905.200L707.700 895L708 954.500L660 919L679 910.600Z"/></g></svg>
</div></body></html>
